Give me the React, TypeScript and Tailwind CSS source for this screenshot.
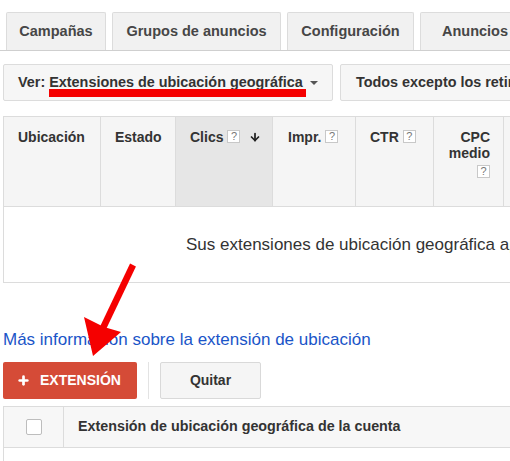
import { Plus, ArrowDown } from 'lucide-react'

const tabs = [
  { label: 'Campañas', w: 'w-[100px]' },
  { label: 'Grupos de anuncios', w: 'w-[169px]' },
  { label: 'Configuración', w: 'w-[127px]' },
  { label: 'Anuncios', w: 'w-[110px]' },
]

function Help() {
  return (
    <span className="shrink-0 inline-flex items-center justify-center w-[13px] h-[13px] mt-[1px] border border-[#c8c8c8] bg-white text-[11px] font-normal text-[#777] leading-none">
      ?
    </span>
  )
}

function PointerArrow() {
  return (
    <svg
      className="absolute left-0 top-0 pointer-events-none"
      width="510"
      height="461"
      viewBox="0 0 510 461"
    >
      <line x1="133" y1="265" x2="103" y2="328" stroke="#f50000" strokeWidth="6.5" />
      <polygon points="84,317 93,356 121,332 104,327" fill="#f50000" />
    </svg>
  )
}

export default function App() {
  return (
    <div className="relative w-[510px] h-[461px] overflow-hidden bg-white font-['Liberation_Sans',Arial,sans-serif]">
      {/* tabs */}
      <div className="flex gap-[6px] pl-[6px] pt-[12px] border-b border-[#cfcfcf]">
        {tabs.map((t) => (
          <div
            key={t.label}
            className={`${t.w} shrink-0 h-[38px] flex items-center justify-center bg-[#f1f1f1] border border-b-0 border-[#dcdcdc] rounded-t-[2px] text-[14.5px] font-bold text-[#464646] whitespace-nowrap`}
          >
            {t.label}
          </div>
        ))}
      </div>

      {/* view selector */}
      <div className="flex gap-[7px] pl-[3px] mt-[13px]">
        <div className="w-[330px] shrink-0 h-[37px] flex items-center pl-[14px] bg-[#f6f6f6] border border-[#dcdcdc] rounded-[2px] text-[14.4px] font-bold text-[#333] whitespace-nowrap">
          <span>Ver:&nbsp;</span>
          <span className="relative">
            Extensiones de ubicación geográfica
            <span className="absolute left-0 right-[-3px] top-[17px] h-[8px] bg-[#f50000]" />
          </span>
          <span className="ml-[7px] w-0 h-0 border-l-[4px] border-r-[4px] border-t-[4px] border-l-transparent border-r-transparent border-t-[#555]" />
        </div>
        <div className="w-[200px] shrink-0 h-[37px] flex items-center pl-[15px] bg-[#f6f6f6] border border-[#dcdcdc] rounded-[2px] text-[14.4px] font-bold text-[#333] whitespace-nowrap">
          Todos excepto los retirados
        </div>
      </div>

      {/* stats table */}
      <div className="ml-[3px] mt-[15px] w-[560px] border-t border-l border-[#dcdcdc]">
        <div className="flex h-[90px] bg-[#f5f5f5] border-b border-[#dcdcdc] text-[14px] font-bold text-[#333] leading-[16px]">
          <div className="w-[97px] shrink-0 pl-[14px] pt-[12px] border-r border-[#dcdcdc]">Ubicación</div>
          <div className="w-[75px] shrink-0 pl-[14px] pt-[12px] border-r border-[#dcdcdc]">Estado</div>
          <div className="w-[97px] shrink-0 pl-[14px] pt-[12px] bg-[#e6e6e6] border-r border-[#dcdcdc] flex items-start gap-[4px]">
            Clics <Help />
            <ArrowDown className="ml-[5px] mt-[2px]" size={12} strokeWidth={3.5} color="#222" />
          </div>
          <div className="w-[83px] shrink-0 pl-[15px] pt-[12px] border-r border-[#dcdcdc] flex items-start gap-[4px]">
            Impr. <Help />
          </div>
          <div className="w-[78px] shrink-0 pl-[14px] pt-[12px] border-r border-[#dcdcdc] flex items-start gap-[4px]">
            CTR <Help />
          </div>
          <div className="w-[70px] shrink-0 pr-[13px] pt-[12px] border-r border-[#dcdcdc] flex flex-col items-end">
            <span>CPC</span>
            <span>medio</span>
            <span className="mt-[3px] flex"><Help /></span>
          </div>
          <div className="flex-1" />
        </div>
        <div className="h-[76px] bg-white border-b border-[#dcdcdc] flex items-center pl-[182px] text-[17px] text-[#333] whitespace-nowrap">
          Sus extensiones de ubicación geográfica aparecerán aquí
        </div>
      </div>

      {/* link */}
      <div className="pl-[3px] mt-[47px] text-[17px] leading-[20px] text-[#1a55c8]">
        Más información sobre la extensión de ubicación
      </div>

      {/* actions */}
      <div className="flex items-center pl-[3px] mt-[12px]">
        <button className="w-[134px] h-[37px] flex items-center pl-[14px] gap-[10px] bg-[#d54b37] rounded-[2px] text-white text-[14px] font-bold">
          <Plus size={13} strokeWidth={5} />
          EXTENSIÓN
        </button>
        <div className="w-px h-[37px] bg-[#e3e3e3] ml-[11px] mr-[11px]" />
        <button className="w-[101px] h-[37px] flex items-center justify-center bg-[#f5f5f5] border border-[#d9d9d9] rounded-[2px] text-[14px] font-bold text-[#333]">
          Quitar
        </button>
      </div>

      {/* extensions table */}
      <div className="ml-[3px] mt-[7px] w-[520px] border-t border-l border-[#dcdcdc]">
        <div className="flex h-[41px] bg-[#f7f7f7] border-b border-[#dcdcdc]">
          <div className="w-[60px] shrink-0 flex items-center justify-center border-r border-[#dcdcdc]">
            <span className="w-[16px] h-[16px] rounded-[2px] border border-[#bdbdbd] bg-white" />
          </div>
          <div className="flex items-center pl-[14px] text-[14.3px] font-bold text-[#333] whitespace-nowrap">
            Extensión de ubicación geográfica de la cuenta
          </div>
        </div>
        <div className="h-[30px] bg-white" />
      </div>

      <PointerArrow />
    </div>
  )
}
